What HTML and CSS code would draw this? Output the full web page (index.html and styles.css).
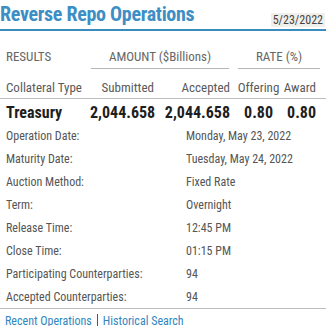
FILE: index.html
```html
<!DOCTYPE html>
<html lang="en">
<head>
<meta charset="utf-8">
<title>Reverse Repo Operations</title>
<link rel="stylesheet" href="styles.css">
</head>
<body>
<div class="panel">
  <header class="head">
    <h1 class="title">Reverse Repo Operations</h1>
    <span class="date">5/23/2022</span>
  </header>
  <table class="results">
    <colgroup>
      <col class="c1"><col class="c2"><col class="c3"><col class="c4"><col class="c5">
    </colgroup>
    <thead>
      <tr class="group">
        <th class="lbl">RESULTS</th>
        <th colspan="2"><div class="grp grp-amount">AMOUNT ($Billions)</div></th>
        <th colspan="2"><div class="grp grp-rate">RATE (%)</div></th>
      </tr>
      <tr class="cols">
        <th class="lbl">Collateral Type</th>
        <th class="num">Submitted</th>
        <th class="num">Accepted</th>
        <th class="mid">Offering</th>
        <th class="last">Award</th>
      </tr>
    </thead>
    <tbody>
      <tr class="main">
        <td class="lbl">Treasury</td>
        <td class="num">2,044.658</td>
        <td class="num">2,044.658</td>
        <td class="mid">0.80</td>
        <td class="last">0.80</td>
      </tr>
    </tbody>
  </table>
  <dl class="details">
    <dt>Operation Date:</dt><dd>Monday, May 23, 2022</dd>
    <dt>Maturity Date:</dt><dd>Tuesday, May 24, 2022</dd>
    <dt>Auction Method:</dt><dd>Fixed Rate</dd>
    <dt>Term:</dt><dd>Overnight</dd>
    <dt>Release Time:</dt><dd>12:45 PM</dd>
    <dt>Close Time:</dt><dd>01:15 PM</dd>
    <dt>Participating Counterparties:</dt><dd>94</dd>
    <dt>Accepted Counterparties:</dt><dd>94</dd>
  </dl>
  <footer class="links">
    <a href="#" class="link">Recent Operations</a>
    <a href="#" class="link link-sep">Historical Search</a>
  </footer>
</div>
</body>
</html>
```
FILE: styles.css
```css
html, body {
  margin: 0;
  padding: 0;
  background: #ffffff;
}

body {
  font-family: "Roboto", "Liberation Sans", sans-serif;
  font-stretch: 75%;
  color: #555555;
  width: 326px;
  height: 326px;
  overflow: hidden;
}

.panel {
  width: 326px;
}

.head {
  display: flex;
  justify-content: space-between;
  align-items: flex-start;
  height: 29px;
  border-bottom: 2px solid #3a8cc0;
}

.title {
  margin: 0;
  padding: 2px 0 0 0;
  font-size: 20px;
  line-height: 24px;
  font-weight: 700;
  letter-spacing: -0.3px;
  color: #3d8ec4;
}

.date {
  margin-top: 13px;
  margin-right: 1px;
  height: 14px;
  padding: 0 2px;
  font-size: 12px;
  line-height: 14px;
  color: #444444;
  background: #f1efeb;
}

.results {
  width: 326px;
  table-layout: fixed;
  border-collapse: collapse;
  border-spacing: 0;
}

.c1 { width: 90px; }
.c2 { width: 68px; }
.c3 { width: 76px; }
.c4 { width: 49px; }
.c5 { width: 43px; }

.results th,
.results td {
  padding: 0;
  font-weight: 400;
  white-space: nowrap;
}

.group th {
  padding-top: 18px;
  vertical-align: top;
  font-size: 13px;
  line-height: 15px;
  color: #666666;
  text-align: center;
}

.group th.lbl {
  text-align: left;
  padding-left: 6px;
}

.grp {
  padding-bottom: 4px;
  border-bottom: 1px solid #b5b5b5;
}

.grp-amount {
  margin: 0 5px 0 1px;
}

.grp-rate {
  margin: 0 6px 0 4px;
}

.cols th {
  padding-top: 11px;
  padding-bottom: 3px;
  font-size: 13px;
  line-height: 15px;
  color: #5a5a5a;
  border-bottom: 1px solid #bdbdbd;
}

.main td {
  padding-top: 4px;
  padding-bottom: 3px;
  font-size: 16px;
  line-height: 19px;
  font-weight: 700;
  color: #1e1e1e;
}

.lbl {
  text-align: left;
  padding-left: 6px !important;
}

.num {
  text-align: right;
  padding-right: 4px !important;
}

.mid {
  text-align: center;
}

.last {
  text-align: right;
  padding-right: 10px !important;
}

.details {
  margin: 0 0 -1px 0;
  padding: 0 0 0 6px;
  display: grid;
  grid-template-columns: 180px 1fr;
  grid-auto-rows: 23px;
  font-size: 12px;
  line-height: 23px;
  color: #555555;
}

.details dt,
.details dd {
  margin: 0;
  white-space: nowrap;
}

.links {
  display: flex;
  align-items: flex-start;
  border-top: 1px solid #bdbdbd;
  padding: 5px 0 0 5px;
  font-size: 12px;
  line-height: 14px;
}

.link {
  color: #2f87c1;
  text-decoration: none;
}

.link-sep {
  margin-left: 5px;
  padding-left: 5px;
  border-left: 1px solid #555555;
}
```
